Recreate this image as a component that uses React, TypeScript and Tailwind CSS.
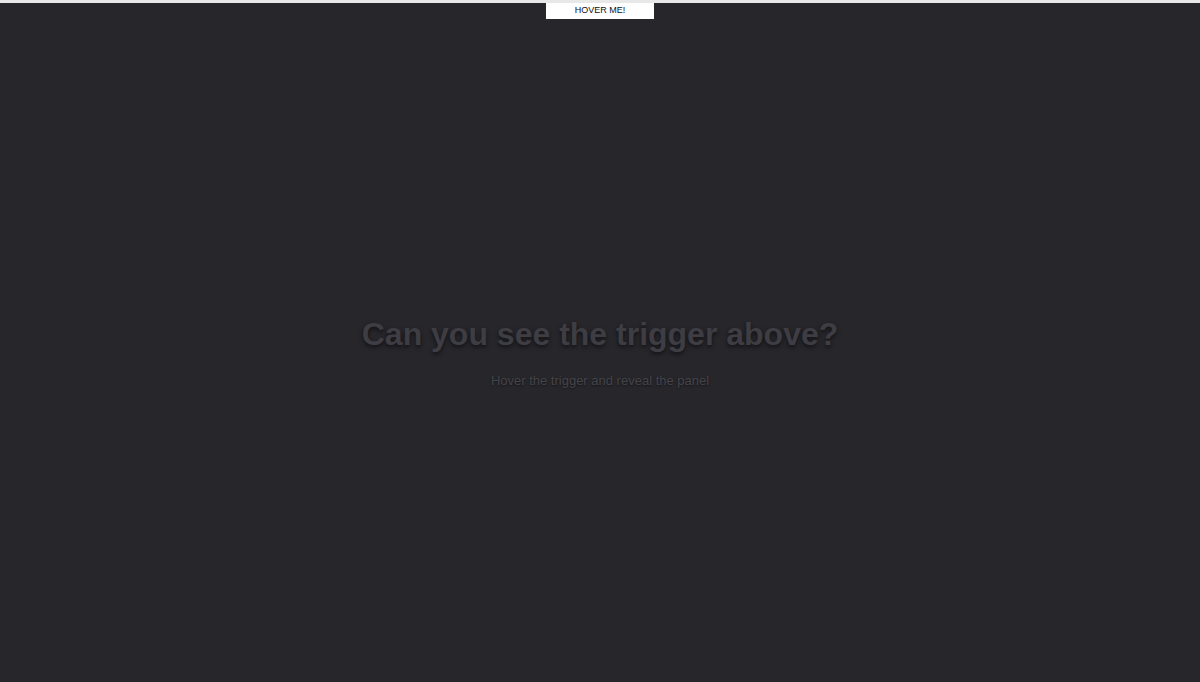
import React from "react";

export default function App() {
  return (
    <div
      className="w-[1200px] h-[682px] bg-[#27262b] flex flex-col items-center overflow-hidden"
      style={{ fontFamily: '"Liberation Sans", Arial, sans-serif' }}
    >
      <div className="w-full h-[3px] bg-[#e8e8e8] shrink-0" />
      <div className="w-[108px] h-[16px] bg-white flex items-center justify-center text-[9px] text-[#111] shrink-0">
        HOVER ME!
      </div>
      <div className="flex-1 flex flex-col items-center justify-center pt-[8px]">
        <h1 className="text-[32px] font-bold text-[#3e3d43] leading-none [text-shadow:0_2px_4px_rgba(0,0,0,0.6)]">
          Can you see the trigger above?
        </h1>
        <p className="mt-[21px] text-[13px] text-[#45444a] [text-shadow:0_1px_2px_rgba(0,0,0,0.5)]">
          Hover the trigger and reveal the panel
        </p>
      </div>
    </div>
  );
}
